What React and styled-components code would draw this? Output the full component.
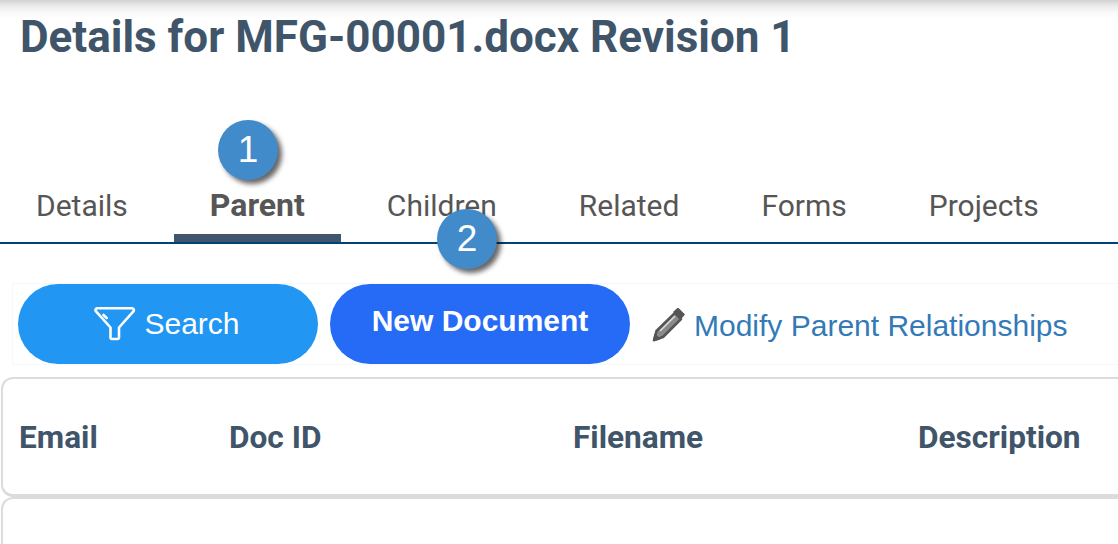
import React from "react";
import styled, { createGlobalStyle } from "styled-components";

const Global = createGlobalStyle`
  html, body { margin: 0; padding: 0; background: #fff; }
  body { width: 1118px; height: 544px; overflow: hidden; font-family: Roboto, sans-serif; }
`;
const Page = styled.div`
  position: relative;
  width: 1118px;
  height: 544px;
  overflow: hidden;
  background: linear-gradient(to bottom, #d2d2d2 0, #ebebeb 6px, #fafafa 13px, #fff 19px);
`;
const Title = styled.h1`
  margin: 0;
  padding: 11px 0 0 20px;
  height: 109px;
  box-sizing: border-box;
  font: 700 44px/52px Roboto, sans-serif;
  color: #405569;
  white-space: nowrap;
`;
const Tabs = styled.nav`
  display: flex;
  gap: 10px;
  height: 135px;
  box-sizing: border-box;
  padding-left: 0;
  border-bottom: 2px solid #004377;
  align-items: flex-end;
`;
const Tab = styled.a`
  padding: 0 36px 11px;
  height: 54px;
  box-sizing: border-box;
  font: ${(p) => (p.$active ? "700 32px" : "400 30px")}/35px Roboto, sans-serif;
  color: #565656;
  white-space: nowrap;
  border-bottom: 8px solid ${(p) => (p.$active ? "#3f566e" : "transparent")};
`;
const Badge = styled.div`
  position: absolute;
  left: ${(p) => p.$x}px;
  top: ${(p) => p.$y}px;
  width: 60px;
  height: 60px;
  border-radius: 50%;
  background: #428bca;
  color: #fff;
  font: 400 37px/60px "Liberation Sans", sans-serif;
  text-align: center;
  box-shadow: 4px 4px 5px rgba(0, 0, 0, 0.6);
`;
const Toolbar = styled.div`
  display: flex;
  align-items: center;
  gap: 12px;
  margin: 39px 0 0 12px;
  padding: 0 0 0 5px;
  border: 1px solid #f8f8f8;
  border-right: none;
  height: 80px;
`;
const Pill = styled.button`
  display: flex;
  align-items: center;
  justify-content: center;
  gap: 8px;
  width: 300px;
  height: 80px;
  border: none;
  padding: 0 ${(p) => (p.$primary ? 0 : 2)}px ${(p) => (p.$primary ? 6 : 0)}px 0;
  border-radius: 40px;
  background: ${(p) => (p.$primary ? "#266bf6" : "#2196f3")};
  color: #fff;
  font: ${(p) => (p.$primary ? "700 30px" : "400 30px")} "Liberation Sans", sans-serif;
`;
const ActionLink = styled.a`
  display: flex;
  align-items: center;
  gap: 9px;
  margin-left: 10px;
  padding-top: 4px;
  font: 400 30px/1 "Liberation Sans", sans-serif;
  color: #337ab7;
  white-space: nowrap;
`;
const LinkIcon = styled.span`
  display: flex;
  margin-top: -3px;
`;
const Row = styled.div`
  display: grid;
  grid-template-columns: 210px 344px 345px 1fr;
  align-items: center;
  box-sizing: border-box;
  width: 1140px;
  margin-left: 1px;
  height: ${(p) => p.$h}px;
  padding: 3px 0 0 16px;
  border-style: solid;
  border-width: 2px 0 ${(p) => p.$bw}px 2px;
  border-radius: 12px;
  border-color: #dcdcdc;
`;
const Cell = styled.div`
  font: 700 31.6px/36px Roboto, sans-serif;
  color: #405569;
  white-space: nowrap;
`;
const Spacer = styled.div`
  height: 12px;
`;

const Funnel = () => (
  <svg width="42" height="36" viewBox="0 0 42 36" fill="none" stroke="#fff" strokeWidth="2.6" strokeLinejoin="round" strokeLinecap="round">
    <path d="M3 2.3H38a1.8 1.8 0 0 1 1.4 3L25 21.5V31.5a1.5 1.5 0 0 1-1.5 1.5H18a1.5 1.5 0 0 1-1.5-1.5V21.5L2 5.3a1.8 1.8 0 0 1 1-3Z" />
    <path d="M9.5 9l3.2 3" />
  </svg>
);
const Pencil = () => (
  <svg width="33" height="34" viewBox="0 0 33 34" fill="none" stroke="#555" strokeLinejoin="round" style={{ filter: "blur(0.6px)" }}>
    <path d="M2 32l2.5-9L23 5l6 6-18 18z" fill="#8a8a8a" strokeWidth="2.6" />
    <path d="M22 4l4-3.5 6 6-3.5 4z" fill="#555" strokeWidth="1.5" />
    <path d="M8 23L23 8" stroke="#ddd" strokeWidth="1.6" />
    <path d="M1.5 33l1.5-7 5 5z" fill="#555" strokeWidth="1" />
  </svg>
);

export default function App() {
  return (
    <Page>
      <Global />
      <Title>Details for MFG-00001.docx Revision 1</Title>
      <Tabs>
        <Tab>Details</Tab>
        <Tab $active>Parent</Tab>
        <Tab>Children</Tab>
        <Tab>Related</Tab>
        <Tab>Forms</Tab>
        <Tab>Projects</Tab>
      </Tabs>
      <Toolbar>
        <Pill><Funnel />Search</Pill>
        <Pill $primary>New Document</Pill>
        <ActionLink><LinkIcon><Pencil /></LinkIcon>Modify Parent Relationships</ActionLink>
      </Toolbar>
      <Spacer />
      <Row $h={120} $bw={3}>
        <Cell>Email</Cell>
        <Cell>Doc ID</Cell>
        <Cell>Filename</Cell>
        <Cell>Description</Cell>
      </Row>
      <Row $h={60} $bw={0} />
      <Badge $x={218} $y={120}>1</Badge>
      <Badge $x={437} $y={209}>2</Badge>
    </Page>
  );
}
